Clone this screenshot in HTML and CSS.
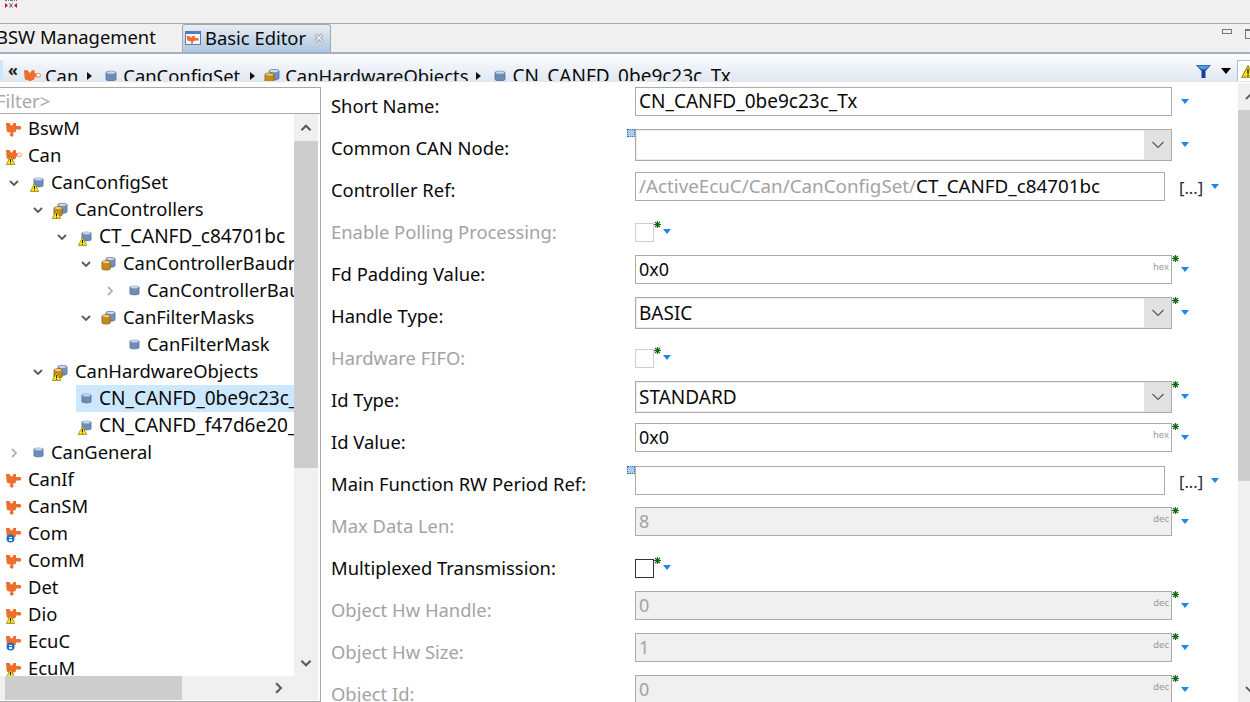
FILE: index.html
```
<!DOCTYPE html>
<html>
<head>
    <title>Basic Editor</title>
    <link rel="stylesheet" href="styles.css">
</head>
<body>

<svg class="defs" width="0" height="0">
    <defs>
        <symbol id="module" viewBox="0 0 16 16">
            <path d="M0 2h3.500L5 4.500h1L7.500 2h2.500v3h3a1.800 1.800 0 1 1 0 3.500h-3v1a2 2 0 0 1-2 2h-1v1a1.800 1.800 0 1 1-2.500 0v-1h-1a3 3 0 0 1-3-3z" fill="#ee6f2d"/>
        </symbol>
        <symbol id="can" viewBox="0 0 16 16">
            <path d="M0 2h3.500L5 4.500h1L7.500 2h2.500v3h1.500v3.500h-1.500v1a2 2 0 0 1-2 2h-1v1a1.800 1.800 0 1 1-2.500 0v-1h-1a3 3 0 0 1-3-3z" fill="#ee6f2d"/>
            <circle cx="13.500" cy="6.800" r="1.900" fill="#fff" stroke="#e39a6c"/>
        </symbol>
        <symbol id="db" viewBox="0 0 12 12">
            <path d="M1 2.500C1 .8 11 .8 11 2.500v7c0 1.700-10 1.700-10 0z" fill="#6d8cb8" stroke="#4c6690" stroke-width=".7"/>
            <ellipse cx="6" cy="2.500" rx="4.500" ry="1.300" fill="#c7d5e8"/>
        </symbol>
        <symbol id="dbs" viewBox="0 0 16 16">
            <path d="M5 3c0-2 10-2 10 0v7c0 1.500-3 2-5 2z" fill="#7592bd" stroke="#4c6690" stroke-width=".7"/>
            <ellipse cx="10" cy="3" rx="4.300" ry="1.200" fill="#cfdcec"/>
            <path d="M1 6.500c0-2 9-2 9 0v7c0 2-9 2-9 0z" fill="#c48a1c" stroke="#7d5510" stroke-width=".7"/>
            <ellipse cx="5.500" cy="6.500" rx="3.800" ry="1.100" fill="#f0cf7a"/>
        </symbol>
        <symbol id="warn" viewBox="0 0 9 9">
            <path d="M4.500 .5L8.800 8.500H.2z" fill="#f7e21c" stroke="#8d7a10" stroke-width=".7"/>
            <path d="M4 3h1v3H4zM4 6.800h1v1H4z" fill="#222"/>
        </symbol>
        <symbol id="info" viewBox="0 0 9 9">
            <circle cx="4.500" cy="4.500" r="4" fill="#1d6fc4"/>
            <path d="M3 3h3v1H3zM3 5h3v2H3z" fill="#fff"/>
        </symbol>
        <symbol id="open" viewBox="0 0 10 10">
            <path d="M1 3l4 4 4-4" fill="none" stroke="#595959" stroke-width="1.800"/>
        </symbol>
        <symbol id="closed" viewBox="0 0 10 10">
            <path d="M3 1l4 4-4 4" fill="none" stroke="#b5b5b5" stroke-width="1.800"/>
        </symbol>
        <symbol id="menu" viewBox="0 0 8 5">
            <path d="M0 0h8L4 5z" fill="#1e86e8"/>
        </symbol>
        <symbol id="star" viewBox="0 0 9 9">
            <path d="M4.500 0v9M0 4.500h9M1.300 1.300l6.400 6.400M7.700 1.300L1.300 7.700" stroke="#126b12" stroke-width="1.500"/>
        </symbol>
        <symbol id="combo" viewBox="0 0 12 8">
            <path d="M.5 1l5.500 5.500L11.500 1" fill="none" stroke="#555" stroke-width="1.100"/>
        </symbol>
    </defs>
</svg>

<div class="app-bar">
    <svg class="app-icon" width="12" height="9" viewBox="0 0 12 9">
        <path d="M0 .5h2M3 .5h1M5 .5h3M9 .5h1M11 .5h1" stroke="#777"/>
        <path d="M0 3l3 2.500L0 8zM12 3L9 5.500 12 8z" fill="#c2174a"/>
        <path d="M4.500 3.500l3 4M7.500 3.500l-3 4" stroke="#555"/>
    </svg>
</div>

<div class="tab-bar">
    <div class="tab">BSW Management</div>
    <div class="tab tab-active">
        <svg class="tab-icon" width="17" height="16" viewBox="0 0 17 16">
            <rect x=".5" y="1.500" width="15" height="13" fill="#f4f7fb" stroke="#5a7ea8"/>
            <rect x="1" y="2" width="14" height="2" fill="#4f7fc0"/>
            <path d="M2 6h2.500l1 1.500h1L7.500 6H10v2h3.500v2.500H10v.5H8v2.500H6V11H4a2 2 0 0 1-2-2z" fill="#ee6f2d"/>
        </svg>
        <span>Basic Editor</span>
        <svg class="tab-close" width="10" height="10" viewBox="0 0 10 10">
            <path d="M1.500 1.500l7 7M8.500 1.500l-7 7" stroke="#8c8c8c" stroke-width="3"/>
            <path d="M1.500 1.500l7 7M8.500 1.500l-7 7" stroke="#fff" stroke-width="1.400"/>
        </svg>
    </div>
    <div class="tab-tools">
        <span class="tool-min"></span>
        <span class="tool-max"></span>
    </div>
</div>

<div class="crumb-bar">
    <span class="crumb-focus"></span>
    <span class="crumb-back">«</span>
    <div class="crumbs">
        <svg class="ico-module" width="17" height="17"><use href="#can"/></svg>
        <span class="crumb crumb-can">Can</span>
        <span class="crumb-sep"></span>
        <svg class="ico-db" width="12" height="12"><use href="#db"/></svg>
        <span class="crumb crumb-set">CanConfigSet</span>
        <span class="crumb-sep sep-wide"></span>
        <svg class="ico-dbs" width="16" height="16"><use href="#dbs"/></svg>
        <span class="crumb crumb-hw">CanHardwareObjects</span>
        <span class="crumb-sep sep-last"></span>
        <svg class="ico-db" width="12" height="12"><use href="#db"/></svg>
        <span class="crumb crumb-last">CN_CANFD_0be9c23c_Tx</span>
    </div>
    <svg class="crumb-filter" width="15" height="13" viewBox="0 0 15 13">
        <path d="M0 0h15L9.500 6v7h-4V6z" fill="#1b3f96"/>
        <path d="M1 .5h13L9.500 4.500h-4z" fill="#4f9fe8"/>
    </svg>
    <span class="crumb-drop"></span>
    <span class="crumb-warn">
        <svg width="14" height="13"><use href="#warn"/></svg>
    </span>
</div>

<div class="main">
    <div class="side">
        <div class="filter">Filter&gt;</div>
        <div class="side-body">
            <div class="tree-wrap">
                <div class="tree" id="tree"></div>
                <div class="vbar">
                    <span class="vbar-up"><svg width="12" height="8" viewBox="0 0 10 7"><path d="M1 5.500l4-4 4 4" fill="none" stroke="#595959" stroke-width="1.800"/></svg></span>
                    <span class="vbar-thumb"></span>
                    <span class="vbar-down"><svg width="12" height="8" viewBox="0 0 10 7"><path d="M1 1.500l4 4 4-4" fill="none" stroke="#595959" stroke-width="1.800"/></svg></span>
                </div>
            </div>
            <div class="hbar">
                <span class="hbar-thumb"></span>
                <svg width="9" height="12" viewBox="0 0 7 10"><path d="M1.500 1l4 4-4 4" fill="none" stroke="#595959" stroke-width="1.800"/></svg>
            </div>
        </div>
    </div>

    <div class="form" id="form"></div>

    <div class="form-bar">
        <span class="form-bar-end"><svg width="10" height="8" viewBox="0 0 10 7"><path d="M1 5.500l4-4 4 4" fill="none" stroke="#595959" stroke-width="1.800"/></svg></span>
        <span class="form-bar-thumb"></span>
        <span class="form-bar-end form-bar-down"><svg width="10" height="8" viewBox="0 0 10 7"><path d="M1 1.500l4 4 4-4" fill="none" stroke="#595959" stroke-width="1.800"/></svg></span>
    </div>
</div>

<script src="page.js"></script>

</body>
</html>
```

FILE: page.js
```
// level, name, chevron, icon, overlay, selected
const treeRows = [
    [0, "BswM", "", "module", ""],
    [0, "Can", "", "can", "warn"],
    [1, "CanConfigSet", "open", "db", "warn"],
    [2, "CanControllers", "open", "dbs", "warn"],
    [3, "CT_CANFD_c84701bc", "open", "db", "warn"],
    [4, "CanControllerBaudr", "open", "dbs", ""],
    [5, "CanControllerBau", "closed", "db", ""],
    [4, "CanFilterMasks", "open", "dbs", ""],
    [5, "CanFilterMask", "", "db", ""],
    [2, "CanHardwareObjects", "open", "dbs", "warn"],
    [3, "CN_CANFD_0be9c23c_Tx", "", "db", "", true],
    [3, "CN_CANFD_f47d6e20_Rx", "", "db", "warn"],
    [1, "CanGeneral", "closed", "db", ""],
    [0, "CanIf", "", "module", ""],
    [0, "CanSM", "", "module", ""],
    [0, "Com", "", "module", "info"],
    [0, "ComM", "", "module", ""],
    [0, "Det", "", "module", ""],
    [0, "Dio", "", "module", "warn"],
    [0, "EcuC", "", "module", "info"],
    [0, "EcuM", "", "module", "warn"],
];

const tree = document.getElementById("tree");

treeRows.forEach(row => {
    const [level, name, chevron, icon, overlay, selected] = row;
    const chevronSvg = chevron ? `<svg class="chevron" width="10" height="10"><use href="#${chevron}"/></svg>` : "";
    const overlaySvg = overlay ? `<svg class="overlay" width="9" height="9"><use href="#${overlay}"/></svg>` : "";
    const iconClass = level === 0 ? "node-module" : icon === "dbs" ? "node-dbs" : "node-db";
    const labelClass = /^C[NT]_/.test(name) ? "node-label code" : "node-label";
    tree.innerHTML += `
        <div class="node level-${level}">
            <span class="node-toggle">${chevronSvg}</span>
            <div class="node-item${selected ? " selected" : ""}">
                <span class="node-icon ${iconClass}"><svg><use href="#${icon}"/></svg>${overlaySvg}</span>
                <span class="${labelClass}">${name}</span>
            </div>
        </div>`;
});

// label, type, value, disabled
const formRows = [
    ["Short Name:", "text", "CN_CANFD_0be9c23c_Tx", false],
    ["Common CAN Node:", "combo", "", false, "mark"],
    ["Controller Ref:", "ref", "CT_CANFD_c84701bc", false, "", "/ActiveEcuC/Can/CanConfigSet/"],
    ["Enable Polling Processing:", "check", "", true],
    ["Fd Padding Value:", "num", "0x0", false, "hex"],
    ["Handle Type:", "combo", "BASIC", false, "star"],
    ["Hardware FIFO:", "check", "", true],
    ["Id Type:", "combo", "STANDARD", false, "star"],
    ["Id Value:", "num", "0x0", false, "hex"],
    ["Main Function RW Period Ref:", "ref", "", false, "mark"],
    ["Max Data Len:", "num", "8", true, "dec"],
    ["Multiplexed Transmission:", "check", "", false],
    ["Object Hw Handle:", "num", "0", true, "dec"],
    ["Object Hw Size:", "num", "1", true, "dec"],
    ["Object Id:", "num", "0", true, "dec"],
];

const menuSvg = '<svg class="menu" width="8" height="5"><use href="#menu"/></svg>';
const starSvg = '<svg class="star" width="7" height="7"><use href="#star"/></svg>';
const markSvg = '<span class="mark"></span>';
const comboArrow = '<span class="combo-arrow"><svg width="12" height="8"><use href="#combo"/></svg></span>';

const form = document.getElementById("form");

formRows.forEach(row => {
    const [label, type, value, disabled, extra, prefix] = row;
    let field = "";

    if (type === "text") {
        field = `<div class="box">${value}</div>${menuSvg}`;
    } else if (type === "combo") {
        const mark = extra === "mark" ? markSvg : "";
        const star = extra === "star" ? starSvg : "";
        field = `<div class="box combo"><span class="combo-value">${value}</span>${comboArrow}${mark}${star}</div>${menuSvg}`;
    } else if (type === "ref") {
        const mark = extra === "mark" ? markSvg : "";
        field = `<div class="box ref"><span class="ref-prefix">${prefix || ""}</span>${value}${mark}</div><span class="browse">[...]</span>${menuSvg}`;
    } else if (type === "num") {
        field = `<div class="box num${disabled ? " disabled" : ""}">${value}<span class="unit">${extra}</span>${starSvg}</div>${menuSvg}`;
    } else {
        field = `<div class="check${disabled ? " disabled" : ""}">${starSvg}</div>${menuSvg}`;
    }

    form.innerHTML += `
        <div class="form-row type-${type}">
            <span class="form-label${disabled ? " disabled" : ""}">${label}</span>
            <div class="form-field">${field}</div>
        </div>`;
});
```

FILE: styles.css
```
* {
    box-sizing: border-box;
}

html,
body {
    height: 702px;
    margin: 0;
    overflow: hidden;
}

body {
    display: flex;
    flex-direction: column;
    font-family: "Noto Sans", sans-serif;
    font-size: 18.4px;
    color: #0a0a0a;
    background-color: white;
}

.defs {
    display: none;
}

.app-bar {
    height: 24px;
    padding-left: 5px;
    background-color: #f0f0f0;
    border-bottom: 1px solid #a8a8a8;
}

.app-icon {
    display: block;
}

.tab-bar {
    display: flex;
    height: 30px;
    background-color: #f0f0f0;
    border-bottom: 2px solid #9fb2c7;
}

.tab {
    display: flex;
    align-items: center;
    width: 184px;
    margin-left: -4px;
    padding-bottom: 2px;
    line-height: 26px;
    white-space: nowrap;
}

.tab-active {
    width: 149px;
    height: 28px;
    margin-left: 2px;
    padding-left: 2px;
    border: 1px solid #a8a8a8;
    border-bottom: none;
    border-radius: 3px 3px 0 0;
    background: linear-gradient(#e9eef4, #adc6e0);
}

.tab-icon {
    flex: none;
    margin-right: 3px;
}

.tab-close {
    flex: none;
    margin-left: 8px;
}

.tab-tools {
    display: flex;
    gap: 13px;
    margin-left: auto;
    padding-top: 5px;
}

.tool-min {
    width: 10px;
    height: 5px;
    border: 1px solid #777;
}

.tool-max {
    width: 10px;
    height: 10px;
    border: 1px solid #777;
    border-top-width: 2px;
    margin-right: -5px;
}

.crumb-bar {
    display: flex;
    align-items: flex-start;
    height: 28px;
    overflow: hidden;
    background: linear-gradient(#fbfcfe, #e1e8f2);
    border-bottom: 1px solid #dfe5ee;
}

.crumb-focus {
    width: 3px;
    height: 20px;
    margin-top: 6px;
    background-color: #cfe6fb;
}

.crumb-back {
    width: 10px;
    margin-left: 5px;
    margin-top: 4px;
    font-size: 16px;
    font-weight: bold;
    line-height: 24px;
    color: #222;
}

.crumbs {
    display: flex;
    align-items: center;
    height: 44px;
    margin-left: 6px;
}

.crumb {
    line-height: 44px;
    white-space: nowrap;
}

.crumb-can {
    margin-left: 4px;
}

.crumb-set {
    margin-left: 6px;
}

.crumb-hw {
    margin-left: 5px;
}

.crumb-last {
    margin-left: 6px;
    font-size: 19px;
}

.crumb-sep {
    width: 0;
    height: 0;
    margin: 0 13px 0 9px;
    border-left: 5px solid #111;
    border-top: 4px solid transparent;
    border-bottom: 4px solid transparent;
}

.sep-wide {
    margin: 0 9px 0 10px;
}

.sep-last {
    margin: 0 13px 0 8px;
}

.crumbs svg {
    flex: none;
}

.ico-module {
    margin-top: 1px;
}

.crumb-filter {
    margin-left: auto;
    margin-top: 11px;
}

.crumb-drop {
    width: 0;
    height: 0;
    margin: 14px 6px 0 10px;
    border-top: 6px solid #000;
    border-left: 5.500px solid transparent;
    border-right: 5.500px solid transparent;
}

.crumb-warn {
    flex: none;
    width: 13px;
    height: 22px;
    margin-top: 6px;
    padding: 4px 0 0 3px;
    border: 1px solid #bbb;
    border-right: none;
    overflow: hidden;
    background-color: white;
}

.crumb-warn svg {
    display: block;
}

.main {
    display: flex;
    flex: 1;
    min-height: 0;
    padding-top: 5px;
}

.side {
    display: flex;
    flex-direction: column;
    flex: none;
    width: 321px;
    border-top: 1px solid #a8a8a8;
    border-right: 1px solid #a8a8a8;
    border-bottom: 1px solid #a8a8a8;
    margin-right: 10px;
}

.filter {
    flex: none;
    height: 26px;
    margin-left: -4px;
    border-bottom: 1px solid #a8a8a8;
    line-height: 26px;
    color: #a8a8a8;
}

.side-body {
    display: flex;
    flex-direction: column;
    flex: 1;
    min-height: 0;
    padding-right: 2px;
}

.tree-wrap {
    display: flex;
    flex: 1;
    min-height: 0;
}

.tree {
    flex: 1;
    min-width: 0;
    overflow: hidden;
    padding-top: 1px;
}

.node {
    display: flex;
    align-items: center;
    height: 27px;
    white-space: nowrap;
}

.level-0 { padding-left: 0; }
.level-1 { padding-left: 0; }
.level-2 { padding-left: 24px; }
.level-3 { padding-left: 48px; }
.level-4 { padding-left: 72px; }
.level-5 { padding-left: 96px; }

.node-toggle {
    display: flex;
    flex: none;
    width: 28px;
    padding-left: 9px;
}

.level-0 .node-toggle {
    width: 6px;
    padding-left: 0;
}

.node-item {
    display: flex;
    align-items: center;
    flex: 1;
    min-width: 0;
    height: 27px;
}

.node-item.selected {
    background-color: #cce8ff;
}

.node-icon {
    position: relative;
    flex: none;
    display: flex;
    align-items: center;
    justify-content: flex-end;
    width: 16px;
    height: 16px;
    margin-right: 7px;
}

.level-0 .node-icon {
    margin-right: 6px;
}

.node-icon svg {
    width: 16px;
    height: 16px;
    flex: none;
}

.node-db svg {
    width: 11px;
    height: 11px;
}

.node-dbs svg {
    width: 15px;
    height: 15px;
}

.node-icon .overlay {
    position: absolute;
    left: 0;
    bottom: -1px;
    width: 9px;
    height: 9px;
}

.node-db .overlay {
    left: 2px;
}

.node-label {
    flex: 1;
    padding-bottom: 2px;
    line-height: 26px;
    overflow: hidden;
}

.node-label.code {
    font-size: 19px;
}

.vbar {
    display: flex;
    flex-direction: column;
    flex: none;
    width: 24px;
    background-color: #f0f0f0;
}

.vbar-up {
    display: flex;
    align-items: center;
    justify-content: center;
    flex: none;
    height: 27px;
}

.vbar-thumb {
    flex: none;
    height: 327px;
    background-color: #cdcdcd;
}

.vbar-down {
    display: flex;
    align-items: center;
    justify-content: center;
    flex: none;
    height: 27px;
    margin-top: auto;
}

.hbar {
    display: flex;
    align-items: center;
    flex: none;
    height: 24px;
    margin-bottom: 1px;
    padding-left: 5px;
    background-color: #f0f0f0;
}

.hbar-thumb {
    width: 177px;
    height: 24px;
    margin-right: 92px;
    background-color: #cdcdcd;
}

.form {
    flex: none;
    width: 907px;
}

.form-row {
    display: flex;
    height: 42px;
}

.form-label {
    flex: none;
    width: 304px;
    padding-top: 6px;
    line-height: 26px;
    white-space: nowrap;
}

.form-label.disabled {
    color: #a3a3a3;
}

.form-field {
    display: flex;
    align-items: flex-start;
    flex: none;
    width: 600px;
}

.box {
    position: relative;
    flex: none;
    width: 537px;
    height: 29px;
    padding-left: 3px;
    border: 1px solid #ababab;
    font-size: 19px;
    line-height: 26px;
    white-space: nowrap;
    background-color: white;
}

.box.num {
    font-size: 18px;
}

.box.disabled {
    background-color: #f0f0f0;
    color: #a3a3a3;
}

.menu {
    flex: none;
    margin-top: 12px;
    margin-left: 9px;
}

.type-combo .menu {
    margin-top: 13px;
}

.combo {
    display: flex;
    height: 32px;
    padding: 0;
    box-shadow: inset 0 0 0 1px #ececec;
    line-height: 30px;
}

.combo-value {
    flex: 1;
    padding-left: 3px;
}

.combo-arrow {
    display: flex;
    align-items: center;
    justify-content: center;
    flex: none;
    width: 27px;
    background-color: #e1e1e1;
}

.ref {
    width: 530px;
    margin-top: 1px;
    font-size: 18.800px;
}

.ref-prefix {
    color: #a3a3a3;
}

.browse {
    flex: none;
    margin-top: 4px;
    margin-left: 14px;
    font-size: 16.500px;
    line-height: 26px;
    color: #2a2a2a;
}

.type-ref .menu {
    margin-left: 8px;
    margin-top: 13px;
}

.unit {
    position: absolute;
    top: 5px;
    right: 2px;
    font-size: 9.500px;
    line-height: 12px;
    color: #9a9a9a;
}

.star {
    position: absolute;
    top: -1px;
    right: -8px;
}

.mark {
    position: absolute;
    top: -1px;
    left: -9px;
    width: 8px;
    height: 8px;
    background-color: #a9cbef;
    border: 1px dotted #2e6fb8;
}

.check {
    position: relative;
    flex: none;
    width: 19px;
    height: 19px;
    margin-top: 10px;
    border: 1px solid #333;
    background-color: white;
}

.check.disabled {
    border-color: #cfcfcf;
}

.check .star {
    top: -3px;
    right: -8px;
}

.type-check .menu {
    margin-top: 16px;
}

.form-bar {
    display: flex;
    flex-direction: column;
    flex: none;
    width: 12px;
    margin-top: -4px;
    margin-left: auto;
    overflow: hidden;
    background-color: #f0f0f0;
}

.form-bar-end {
    display: flex;
    align-items: center;
    flex: none;
    height: 27px;
    padding-left: 7px;
}

.form-bar-end svg {
    flex: none;
}

.form-bar-down {
    margin-top: auto;
}

.form-bar-thumb {
    flex: none;
    height: 371px;
    background-color: #cdcdcd;
}
```
